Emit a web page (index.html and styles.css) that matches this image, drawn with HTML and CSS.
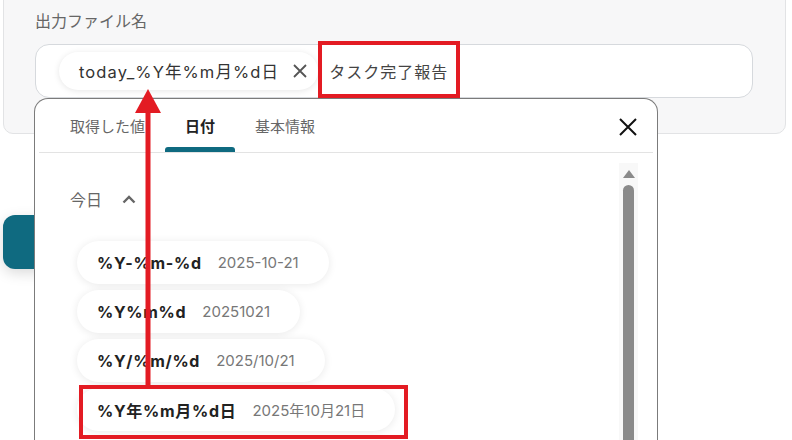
FILE: index.html
```html
<!DOCTYPE html>
<html lang="ja">
<head>
<meta charset="utf-8">
<link rel="stylesheet" href="styles.css">
</head>
<body>
  <div class="card">
    <div class="label">出力ファイル名</div>
    <div class="field">
      <span class="chip">
        <span class="chip-text">today_%Y年%m月%d日</span>
        <svg class="chip-x" viewBox="0 0 14 14" width="14" height="14"><path d="M1 1L13 13M13 1L1 13" stroke="#555" stroke-width="1.8" fill="none"/></svg>
      </span>
      <span class="field-text">タスク完了報告</span>
    </div>
  </div>
  <div class="teal-btn"></div>

  <div class="panel">
    <div class="tabs">
      <div class="tab">取得した値</div>
      <div class="tab active">日付</div>
      <div class="tab">基本情報</div>
      <svg class="close" viewBox="0 0 18 18" width="18" height="18"><path d="M1 1L17 17M17 1L1 17" stroke="#111" stroke-width="2" fill="none"/></svg>
    </div>
    <div class="panel-body">
      <div class="content">
        <div class="section-head">
          <span>今日</span>
          <svg class="chev" viewBox="0 0 14 9" width="14" height="9"><path d="M1.5 7.5L7 2L12.5 7.5" stroke="#666" stroke-width="2.4" fill="none"/></svg>
        </div>
        <div class="items">
          <div class="item"><b>%Y-%m-%d</b><span class="val">2025-10-21</span></div>
          <div class="item"><b>%Y%m%d</b><span class="val">20251021</span></div>
          <div class="item"><b>%Y/%m/%d</b><span class="val">2025/10/21</span></div>
          <div class="item"><b>%Y年%m月%d日</b><span class="val">2025年10月21日</span></div>
        </div>
      </div>
      <div class="scroll">
        <div class="scroll-up"></div>
        <div class="scroll-thumb"></div>
      </div>
    </div>
  </div>

  <div class="mark mark-text"></div>
  <div class="mark mark-item"></div>
  <svg class="arrow" viewBox="0 0 30 300" width="30" height="300">
    <polygon points="15,2 2,26 28,26" fill="#e31b23"/>
    <rect x="12.5" y="24" width="5" height="276" fill="#e31b23"/>
  </svg>
</body>
</html>
```

FILE: styles.css
```css
* { box-sizing: border-box; }
html, body { margin: 0; padding: 0; }
body {
  width: 792px;
  height: 440px;
  overflow: hidden;
  position: relative;
  background: #ffffff;
  font-family: "Inter", "Noto Sans CJK JP", sans-serif;
  color: #333;
}
.card {
  margin: -20px 6px 0 3px;
  padding: 27px 32px 35px 31px;
  background: #f7f7f8;
  border: 1px solid #e2e3e5;
  border-radius: 10px;
}
.label {
  font-size: 16px;
  line-height: 24px;
  color: #666;
  font-family: "Noto Sans CJK JP", sans-serif;
}
.field {
  margin-top: 12px;
  height: 54px;
  background: #fff;
  border: 1px solid #d6d9dd;
  border-radius: 14px;
  display: flex;
  align-items: center;
  padding-left: 23px;
}
.chip {
  height: 38px;
  display: flex;
  align-items: center;
  padding: 0 11px 0 20px;
  border-radius: 19px;
  background: #fff;
  box-shadow: 0 1px 6px rgba(0,0,0,0.10);
  gap: 14px;
}
.chip-text {
  font-size: 16.5px;
  color: #333;
  letter-spacing: 1.1px;
}
.chip-x { display: block; }
.field-text {
  margin-left: 11px;
  font-size: 16px;
  letter-spacing: 1px;
  color: #444;
  font-family: "Noto Sans CJK JP", sans-serif;
}
.teal-btn {
  margin: 81px 0 0 3px;
  width: 140px;
  height: 54px;
  background: #0f6a80;
  border-radius: 12px;
  box-shadow: 0 4px 14px rgba(0,0,0,0.15);
}
.panel {
  position: absolute;
  left: 34px;
  top: 98px;
  width: 624px;
  height: 360px;
  background: #fff;
  border: 1px solid #7b7b7b;
  border-bottom: none;
  border-radius: 14px 14px 0 0;
}
.tabs {
  display: flex;
  align-items: stretch;
  height: 54px;
  margin: 0 4px;
  padding-left: 11px;
  border-bottom: 1px solid #e3e3e3;
}
.tab {
  position: relative;
  display: flex;
  align-items: center;
  padding: 0 20px;
  font-size: 15px;
  color: #666;
  font-family: "Noto Sans CJK JP", sans-serif;
}
.tab.active {
  color: #222;
  font-weight: 700;
}
.tab.active::after {
  content: "";
  position: absolute;
  left: 0;
  right: 0;
  bottom: 0;
  height: 5px;
  background: #0f6a80;
  border-radius: 3px 3px 0 0;
}
.close {
  margin: 19px 16px 0 auto;
  display: block;
}
.panel-body {
  display: flex;
  align-items: flex-start;
}
.content {
  flex: 1;
  padding-left: 35px;
}
.section-head {
  margin-top: 34px;
  height: 24px;
  display: flex;
  align-items: center;
  gap: 20px;
  font-size: 16px;
  color: #666;
  font-family: "Noto Sans CJK JP", sans-serif;
}
.chev { display: block; }
.items {
  margin-top: 30px;
  padding-left: 7px;
  display: flex;
  flex-direction: column;
  align-items: flex-start;
  gap: 6px;
}
.item {
  height: 43px;
  display: flex;
  align-items: center;
  gap: 16px;
  padding: 0 30px 0 20px;
  border-radius: 22px;
  background: #fff;
  box-shadow: 0 1px 8px rgba(0,0,0,0.09);
}
.item b {
  font-size: 16px;
  font-weight: 700;
  color: #222;
  letter-spacing: 0.7px;
}
.item .val {
  font-size: 15px;
  color: #777;
}
.scroll {
  margin: 10px 19px 0 0;
  width: 19px;
  height: 300px;
  background: #f8f8f8;
  display: flex;
  flex-direction: column;
  align-items: center;
}
.scroll-up {
  margin-top: 7px;
  width: 0;
  height: 0;
  border-left: 6.5px solid transparent;
  border-right: 6.5px solid transparent;
  border-bottom: 8px solid #8a8a8a;
}
.scroll-thumb {
  margin-top: 7px;
  width: 11px;
  flex: 1;
  background: #8a8a8a;
  border-radius: 6px 6px 0 0;
}
.mark {
  position: absolute;
  border: 4px solid #e31b23;
}
.mark-text {
  left: 318px;
  top: 41px;
  width: 142px;
  height: 57px;
}
.mark-item {
  left: 79px;
  top: 385px;
  width: 329px;
  height: 54px;
}
.arrow {
  position: absolute;
  left: 133px;
  top: 87px;
}
```
